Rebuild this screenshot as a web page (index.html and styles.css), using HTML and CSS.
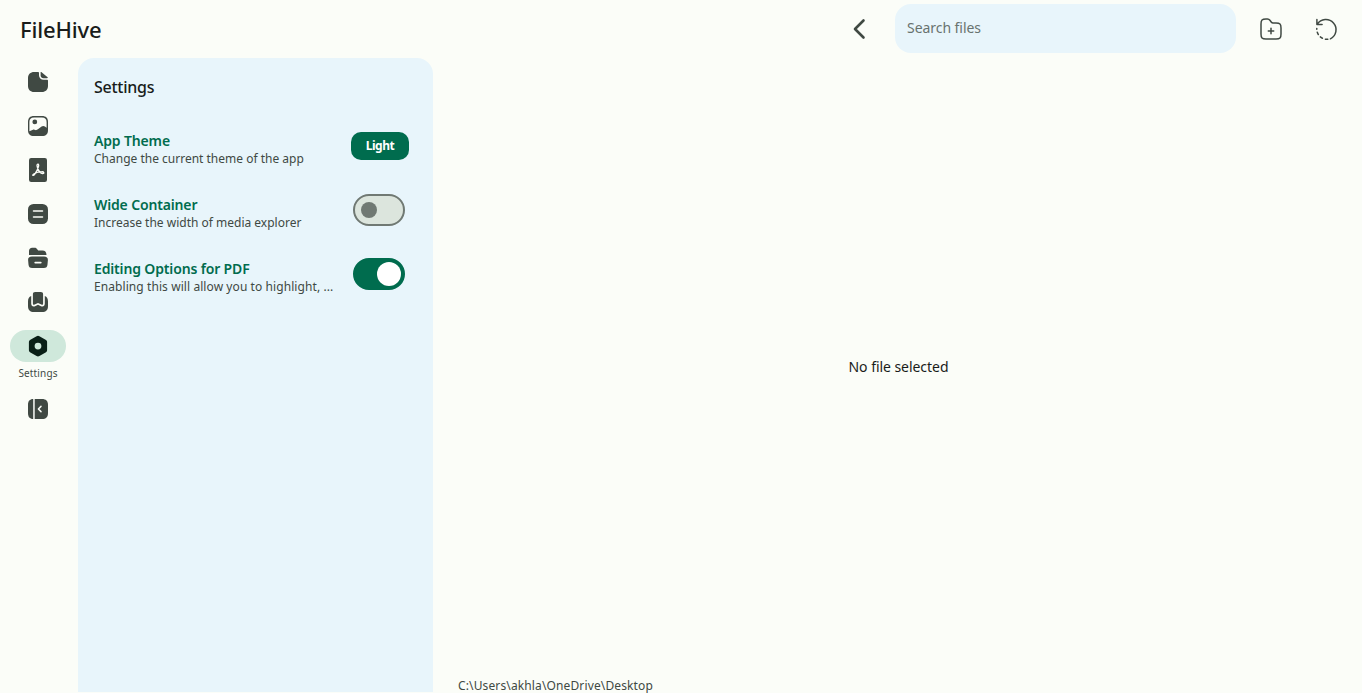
FILE: index.html
```html
<!DOCTYPE html>
<html lang="en">
<head>
<meta charset="utf-8">
<title>FileHive</title>
<link rel="stylesheet" href="styles.css">
</head>
<body>
<div class="app">
  <header class="topbar">
    <h1 class="brand"><span>FileHive</span></h1>
    <svg class="back" viewBox="0 0 24 24"><path d="M16.500 3.500L8 12l8.500 8.500"/></svg>
    <div class="search"><span>Search files</span></div>
    <svg class="action" viewBox="0 0 24 24"><path d="M22 11v6c0 4-1 5-5 5H7c-4 0-5-1-5-5V7c0-4 1-5 5-5h1.500c1.500 0 1.830.440 2.400 1.200l1.500 2c.380.500.600.800 1.600.800h3c4 0 5 1 5 5zM12 11.300v5.400M9.300 14h5.400"/></svg>
    <svg class="action" viewBox="0 0 24 24"><path d="M1.900 2.500v5h5.200M2.300 7.100A10.200 10.200 0 1 1 15.400 21.800"/><path class="dashes" d="M12.800 22.300a10.200 10.200 0 0 1-11-10.900"/></svg>
  </header>
  <div class="body">
    <nav class="rail">
      <svg viewBox="0 0 24 24"><path d="M21 9.800h-3.400c-2.600 0-4.600-2-4.600-4.600V3c0-.550-.450-1-1-1H8C4.600 2 2 4.200 2 8v8c0 3.800 2.600 6 6 6h8c3.400 0 6-2.200 6-6v-5.200c0-.550-.450-1-1-1z"/><path d="M15.600 2.200c-.500-.400-1-.100-1 .4v2.800c0 1.600 1.300 2.800 2.900 2.800h3.600c.7 0 .9-.5.5-.9z"/></svg>
      <svg viewBox="0 0 24 24"><path fill-rule="evenodd" d="M8 2h8c4 0 6 2 6 6v8c0 4-2 6-6 6H8c-4 0-6-2-6-6V8c0-4 2-6 6-6zm.1 1.400c-3.200 0-4.700 1.500-4.700 4.700v9.100l3.600-1.500c1-.5 1.600.3 2.300.4 1.100.2 1.900-.3 2.600-.8l3.700-2.800c1.300-1 2.400-.6 3.300.1l1.700 1.200V8.100c0-3.200-1.500-4.700-4.700-4.700z"/><circle cx="8.800" cy="7.900" r="2.400"/></svg>
      <svg viewBox="0 0 24 24"><rect x="3" y="0" width="18" height="24" rx="2.200"/><path class="cut-line thin" d="M12 6.200c-1.800 0-.7 3 .1 5 .8 2.200 2.700 4 4.500 4.300 2 .2 1.500-2-.8-1.800-2.200.1-5.700.9-7.700 2-2.600 1.700-.8 2.600.7.400 1.400-2 3-5.100 3.600-7.200.4-1.500.4-2.700-.4-2.700z"/></svg>
      <svg viewBox="0 0 24 24"><rect x="2" y="2" width="20" height="20" rx="5.500"/><path class="cut-line" d="M7.500 9h9M7.500 15h9"/></svg>
      <svg viewBox="0 0 24 24"><path d="M3 9V5c0-2 1.200-3.300 3.200-3.300h2.500c1 0 1.700.3 2.300 1.200l1.200 1.700h4.300c2.400 0 4 1.500 4 4.400z"/><path fill-rule="evenodd" d="M6 10.500h12c2.600 0 4.100 1.200 3.900 3.600l-.4 4.300c-.2 2.300-1.300 3.600-3.700 3.600H6.200c-2.400 0-3.500-1.300-3.700-3.600l-.4-4.300c-.2-2.400 1.300-3.600 3.900-3.600zm3.200 5.200a.85.850 0 0 0 0 1.700h5.600a.85.850 0 0 0 0-1.700z"/></svg>
      <svg viewBox="0 0 24 24"><path d="M5.200 6C3 6.800 2 8.600 2 11.400V16c0 4 2 6 6 6h8c4 0 6-2 6-6v-4.600c0-2.800-1-4.600-3.200-5.400v7.600c0 2.400-1.800 3.600-3.800 2.600L12 14.800l-3 1.400c-2 1-3.800-.2-3.800-2.600z"/><path d="M9.200 2h5.600c1.500 0 2.300.9 2.300 2.300v9.300c0 1.100-.8 1.500-1.700 1L12 12.900l-3.400 1.700c-.9.500-1.700.1-1.700-1V4.300C6.900 2.900 7.700 2 9.200 2z"/></svg>
      <div class="active">
        <div class="pill"><svg viewBox="0 0 24 24"><path fill-rule="evenodd" d="M10.600 2.200q1.400-.9 2.800 0l6.200 3.500c1 .6 1.500 1.400 1.500 2.600v7.600c0 1.200-.5 2-1.500 2.600l-6.200 3.500q-1.400.8-2.800 0l-6.200-3.500c-1-.6-1.500-1.400-1.500-2.600V8.300c0-1.200.5-2 1.500-2.600zM12 8.700a3.400 3.400 0 1 0 0 6.800 3.400 3.400 0 0 0 0-6.800z"/></svg></div>
        <span>Settings</span>
      </div>
      <svg viewBox="0 0 24 24"><path d="M7.200 2C3.700 2.100 2 4 2 8v8c0 4 1.700 5.900 5.200 6zM8.700 2H16c4 0 6 2 6 6v8c0 4-2 6-6 6H8.700z"/><path class="cut-line" d="M15 9.400l-2.600 2.600 2.600 2.600"/></svg>
    </nav>
    <aside class="panel">
      <h2><span>Settings</span></h2>
      <div class="setting">
        <div class="copy"><b>App Theme</b><p>Change the current theme of the app</p></div>
        <button class="theme">Light</button>
      </div>
      <div class="setting">
        <div class="copy"><b>Wide Container</b><p>Increase the width of media explorer</p></div>
        <div class="switch"><i></i></div>
      </div>
      <div class="setting">
        <div class="copy"><b>Editing Options for PDF</b><p class="long">Enabling this will allow you to highlight, ...</p></div>
        <div class="switch on"><i></i></div>
      </div>
    </aside>
    <main class="viewer">
      <div class="empty">No file selected</div>
      <footer>C:\Users\akhla\OneDrive\Desktop</footer>
    </main>
  </div>
</div>
</body>
</html>
```
FILE: styles.css
```css
* { box-sizing: border-box; }
body { margin: 0; background: #fbfdf8; color: #191c1a; font-family: "Noto Sans", sans-serif; overflow: hidden; }
h1, h2, p { margin: 0; }
svg { display: block; flex: none; }
.app { width: 1362px; height: 693px; display: flex; flex-direction: column; }
.topbar { height: 58px; flex: none; display: flex; align-items: center; padding: 0 24px 0 20px; }
.brand { font-size: 22px; line-height: 30px; font-weight: 500; flex: 1; letter-spacing: -.15px; }
.back, .action { width: 24px; height: 24px; fill: none; stroke: #404943; stroke-width: 1.500; stroke-linecap: round; stroke-linejoin: round; }
.back { stroke-width: 2.600; margin-right: 24px; }
.search { width: 341px; height: 49px; border-radius: 16px; background: #e8f5fb; color: #68736f; padding: 0 12px; font-size: 14px; line-height: 47px; letter-spacing: -.05px; margin: 0 23px 1px 0; }
.action + .action { margin: 0 -1px 0 32px; }
.dashes { stroke-dasharray: 2.500 3; }
.body { flex: 1; display: flex; min-height: 0; }
.rail { width: 78px; display: flex; flex-direction: column; align-items: center; padding: 12px 2px 0 0; gap: 20px; }
.rail svg { width: 24px; height: 24px; fill: #404943; }
.rail .cut-line { fill: none; stroke: #fbfdf8; stroke-width: 1.500; stroke-linecap: round; stroke-linejoin: round; }
.rail .thin { stroke-width: 1.300; }
.active { width: 56px; height: 51px; margin: -4px 0 -4px; display: flex; flex-direction: column; align-items: center; color: #404943; font-size: 10px; line-height: 14px; letter-spacing: .15px; gap: 4px; }
.pill { width: 56px; height: 32px; flex: none; border-radius: 16px; background: #cfe8db; padding: 4px 16px; }
.rail .pill svg { fill: #0a1f17; }
.panel { width: 355px; height: 634px; border-radius: 16px 16px 0 0; background: #e8f5fb; padding: 18px 24px 0 16px; }
.panel h2 { font-size: 16px; font-weight: 500; line-height: 22px; letter-spacing: -.25px; margin-bottom: 34px; }
.setting { height: 64px; display: flex; justify-content: space-between; align-items: flex-start; }
.copy { width: 250px; white-space: nowrap; }
.copy b { display: block; color: #006c4e; font-size: 14px; line-height: 18px; font-weight: 600; letter-spacing: -.15px; }
.copy p { color: #404943; font-size: 12px; line-height: 18px; }
.copy .long { letter-spacing: .08px; }
.theme { width: 58px; height: 28px; flex: none; border: 0; border-radius: 10px; background: #006c4e; color: #fff; font: 700 12px/28px "Noto Sans", sans-serif; letter-spacing: -.5px; padding: 0; }
.switch { width: 52px; height: 32px; flex: none; border: 2px solid #707973; border-radius: 16px; background: #dce5dd; padding: 6px; margin: -2px 4px 0 0; }
.switch i { display: block; width: 16px; height: 16px; border-radius: 50%; background: #707973; }
.switch.on { border-color: #006c4e; background: #006c4e; padding: 2px 2px 2px 22px; }
.switch.on i { width: 24px; height: 24px; background: #fff; }
.viewer { flex: 1; display: flex; flex-direction: column; padding-left: 2px; }
.empty { flex: 1; display: flex; align-items: center; justify-content: center; font-size: 14px; letter-spacing: -.05px; padding-bottom: 2px; }
footer { height: 17px; padding-left: 23px; font-size: 12px; line-height: 20px; letter-spacing: .13px; color: #404943; }
```
